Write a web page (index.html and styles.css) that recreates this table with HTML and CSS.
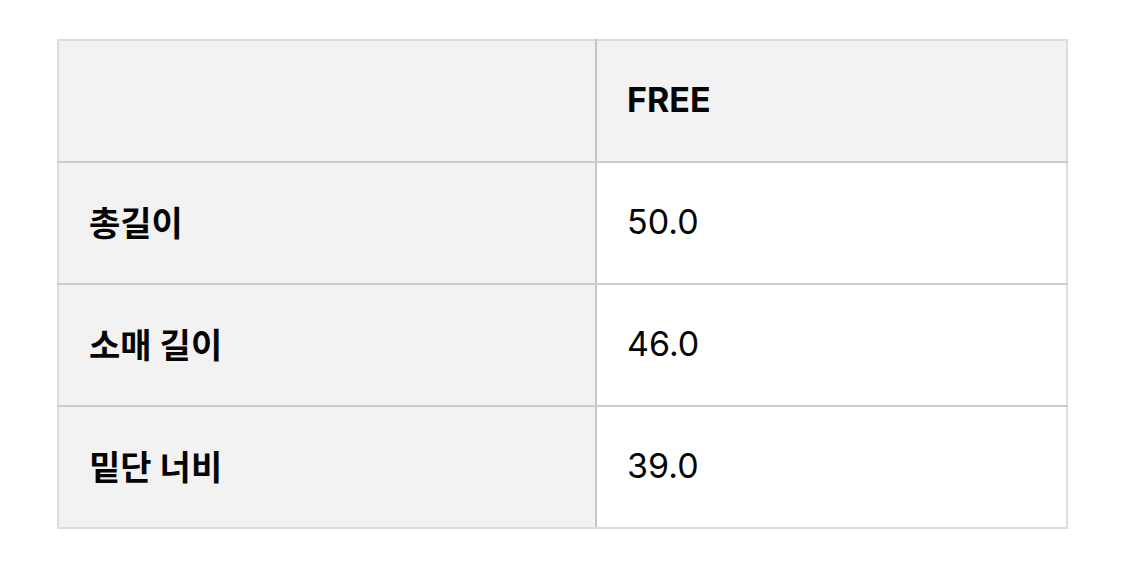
FILE: index.html
```html
<!DOCTYPE html>
<html lang="ko">
<head>
<meta charset="utf-8">
<link rel="stylesheet" href="styles.css">
</head>
<body>
<div class="page">
  <table class="size-table">
    <tr class="head">
      <th class="label"></th>
      <th class="value">FREE</th>
    </tr>
    <tr>
      <th class="label">총길이</th>
      <td class="value">50.0</td>
    </tr>
    <tr>
      <th class="label">소매 길이</th>
      <td class="value">46.0</td>
    </tr>
    <tr>
      <th class="label">밑단 너비</th>
      <td class="value">39.0</td>
    </tr>
  </table>
</div>
</body>
</html>
```
FILE: styles.css
```css
html, body {
  margin: 0;
  padding: 0;
  background: #ffffff;
}
.page {
  padding: 39px 0 0 57px;
}
.size-table {
  border-collapse: collapse;
  width: 1011px;
  font-family: Inter, "Noto Sans CJK KR", sans-serif;
  font-size: 34px;
  color: #050505;
  border: 2px solid #dcdcdc;
}
.size-table th,
.size-table td {
  height: 122px;
  padding: 0 0 4px 30px;
  text-align: left;
  box-sizing: border-box;
  border-top: 2px solid #cccccc;
  border-bottom: 2px solid #cccccc;
}
.size-table tr.head th {
  border-top: 2px solid #dcdcdc;
}
.size-table tr:last-child th,
.size-table tr:last-child td {
  border-bottom: 2px solid #dcdcdc;
}
.size-table .label {
  width: 538px;
  background: #f2f2f2;
  font-weight: 700;
  border-right: 2px solid #c4c4c4;
  border-left: 2px solid #dcdcdc;
}
.size-table .value {
  font-weight: 400;
  border-right: 2px solid #dcdcdc;
}
.size-table tr.head .value {
  background: #f2f2f2;
  font-weight: 700;
}
```
